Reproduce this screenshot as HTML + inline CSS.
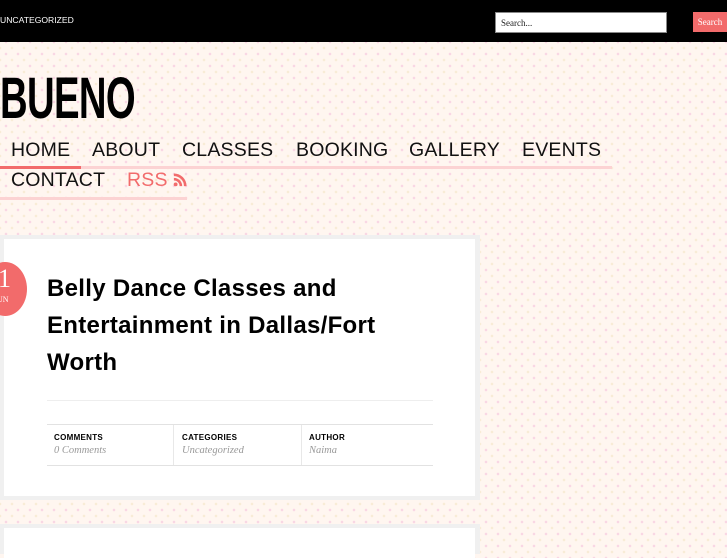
<!DOCTYPE html>
<html><head><style>
body{margin:0;width:727px;height:545px;overflow:hidden;position:relative;font-family:"Liberation Sans",sans-serif;
background-color:#fff6f0;
background-image:radial-gradient(circle,#f9d6e4 1px,transparent 1.6px),radial-gradient(circle,#f8ecd6 1px,transparent 1.6px);
background-size:12px 12px,12px 12px;background-position:0 0,6px 6px;}
.top{position:absolute;left:0;top:0;width:727px;height:42px;background:#000;}
.abs{position:absolute;}
.nav{font-size:19.5px;color:#111;letter-spacing:0.2px}
</style></head><body>
<div class="top"></div>
<div class="abs" style="left:0;top:15px;color:#fff;font-size:8.6px;">UNCATEGORIZED</div>
<div class="abs" style="left:495px;top:12px;width:172px;height:21px;background:#fff;border:1px solid #888;box-sizing:border-box;font-family:'Liberation Serif',serif;font-size:9px;padding:5px 0 0 5px;color:#222">Search...</div>
<div class="abs" style="left:693px;top:12px;width:34px;height:20px;background:#f26b6b;color:#fff;font-family:'Liberation Serif',serif;font-size:9px;text-align:center;line-height:20px">Search</div>
<div class="abs" style="left:0;top:66px;font-size:58px;font-weight:bold;color:#000;transform:scaleX(0.66);transform-origin:0 0;letter-spacing:-1px;line-height:66px">BUENO</div>
<div class="abs nav" style="left:11px;top:139px">HOME</div>
<div class="abs nav" style="left:92px;top:139px">ABOUT</div>
<div class="abs nav" style="left:182px;top:139px">CLASSES</div>
<div class="abs nav" style="left:296px;top:139px">BOOKING</div>
<div class="abs nav" style="left:409px;top:139px">GALLERY</div>
<div class="abs nav" style="left:522px;top:139px">EVENTS</div>
<div class="abs" style="left:0;top:166px;width:612px;height:3px;background:#fcd3d3"></div>
<div class="abs" style="left:0;top:166px;width:81px;height:3px;background:#f26b6b"></div>
<div class="abs nav" style="left:11px;top:169px">CONTACT</div>
<div class="abs nav" style="left:127px;top:169px;color:#f26b6b">RSS</div>
<svg class="abs" style="left:173px;top:173px" width="14" height="14" viewBox="0 0 16 16"><circle cx="3" cy="13" r="2.2" fill="#f26b6b"/><path d="M1 7a8 8 0 0 1 8 8M1 2a13 13 0 0 1 13 13" stroke="#f26b6b" stroke-width="3" fill="none"/></svg>
<div class="abs" style="left:0;top:197px;width:187px;height:3px;background:#fcd3d3"></div>

<div class="abs" style="left:0;top:235px;width:480px;height:265px;background:#f0f0f0"></div>
<div class="abs" style="left:4px;top:239px;width:471px;height:257px;background:#fff"></div>
<div class="abs" style="left:-17px;top:262px;width:44px;height:54px;border-radius:50%;background:#f26b6b"></div>
<div class="abs" style="left:-2px;top:264px;color:#fff;font-family:'Liberation Serif',serif;font-size:26px">1</div>
<div class="abs" style="left:-3px;top:295px;color:#fff;font-family:'Liberation Serif',serif;font-size:8px">UN</div>
<div class="abs" style="left:47px;top:270px;font-size:24px;font-weight:bold;line-height:37px;color:#000;letter-spacing:0.3px;width:400px">Belly Dance Classes and Entertainment in Dallas/Fort Worth</div>
<div class="abs" style="left:47px;top:400px;width:386px;height:1px;background:#eee"></div>
<div class="abs" style="left:47px;top:424px;width:386px;height:1px;background:#e2e2e2"></div>
<div class="abs" style="left:47px;top:465px;width:386px;height:1px;background:#e2e2e2"></div>
<div class="abs" style="left:173px;top:425px;width:1px;height:40px;background:#e8e8e8"></div>
<div class="abs" style="left:301px;top:425px;width:1px;height:40px;background:#e8e8e8"></div>
<div class="abs" style="left:54px;top:433px;font-size:8px;font-weight:bold;letter-spacing:0.3px">COMMENTS</div>
<div class="abs" style="left:182px;top:433px;font-size:8px;font-weight:bold;letter-spacing:0.3px">CATEGORIES</div>
<div class="abs" style="left:309px;top:433px;font-size:8px;font-weight:bold;letter-spacing:0.3px">AUTHOR</div>
<div class="abs" style="left:54px;top:445px;font-size:10.5px;font-style:italic;color:#999;font-family:'Liberation Serif',serif">0 Comments</div>
<div class="abs" style="left:182px;top:445px;font-size:10.5px;font-style:italic;color:#999;font-family:'Liberation Serif',serif">Uncategorized</div>
<div class="abs" style="left:309px;top:445px;font-size:10.5px;font-style:italic;color:#999;font-family:'Liberation Serif',serif">Naima</div>

<div class="abs" style="left:0;top:524px;width:480px;height:30px;background:#f0f0f0"></div>
<div class="abs" style="left:4px;top:528px;width:471px;height:30px;background:#fff"></div>
</body></html>
